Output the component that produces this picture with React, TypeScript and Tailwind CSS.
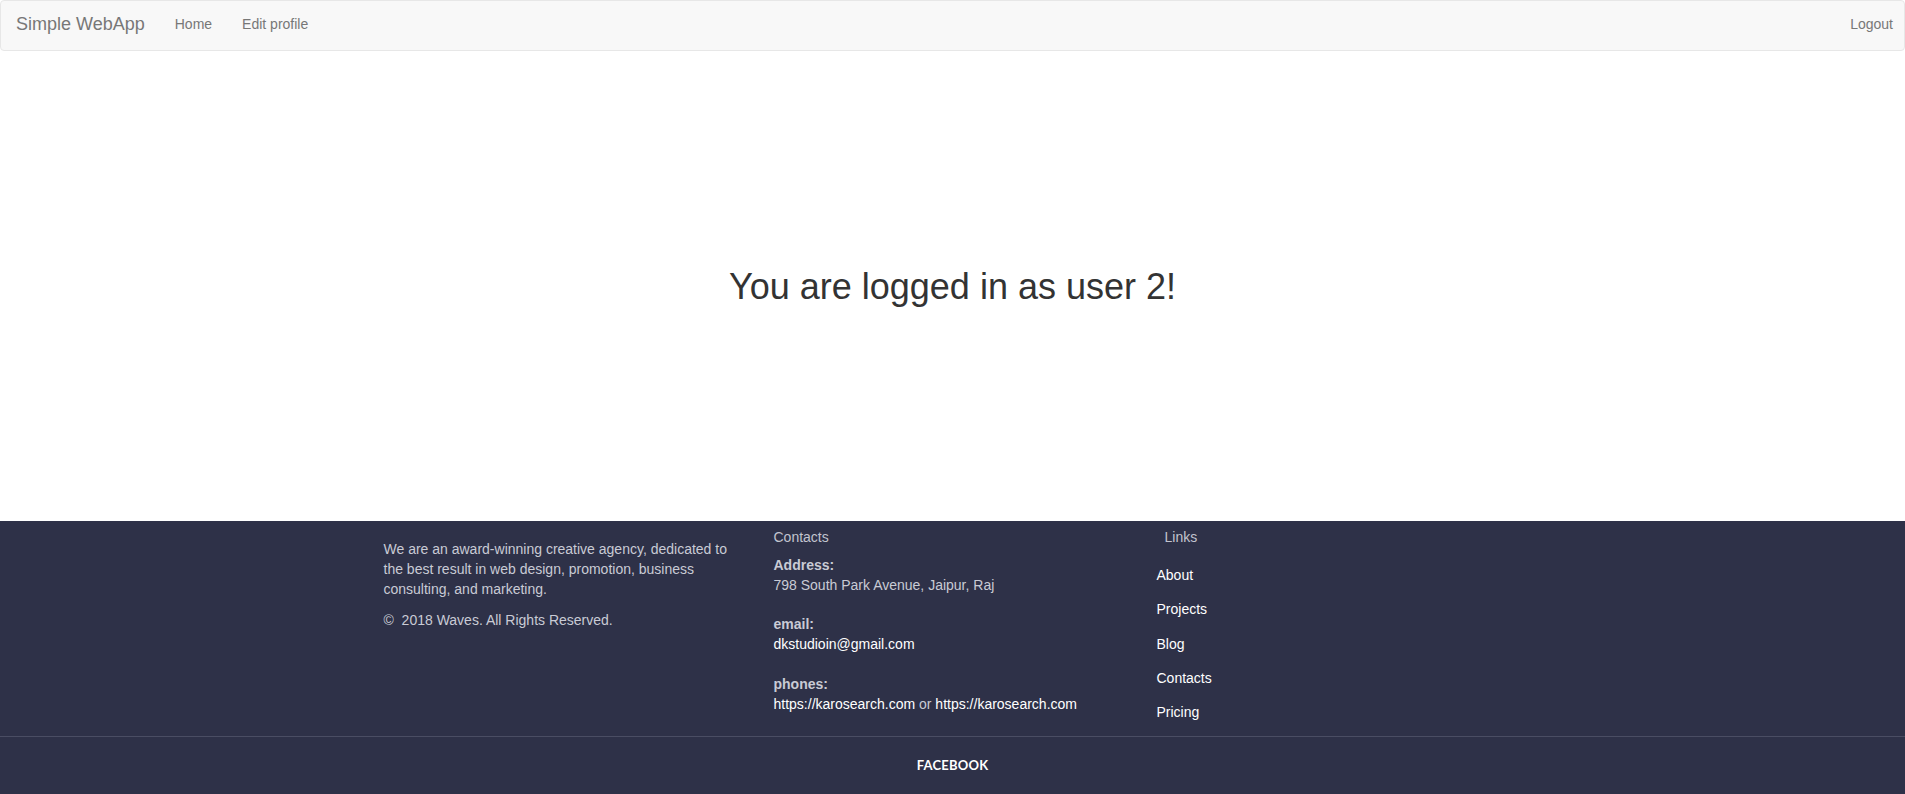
export default function App() {
  return (
    <div className="min-h-[794px] bg-white font-['Liberation_Sans',Arial,sans-serif] text-[14px] text-[#333]">
      <Navbar />
      <main className="flex h-[470px] items-center justify-center">
        <h1 className="mt-[2px] text-[36px] leading-[40px] font-normal text-[#333]">
          You are logged in as user 2!
        </h1>
      </main>
      <Footer />
    </div>
  );
}

function Navbar() {
  return (
    <nav className="flex h-[51px] items-start justify-between rounded-[4px] border border-[#e7e7e7] bg-[#f8f8f8] pt-[13px] text-[#777]">
      <div className="flex items-center">
        <a href="/" className="px-[15px] text-[18px] leading-[20px]">
          Simple WebApp
        </a>
        <a href="/" className="px-[15px] leading-[20px]">
          Home
        </a>
        <a href="/profile" className="px-[15px] leading-[20px]">
          Edit profile
        </a>
      </div>
      <a href="/logout" className="pl-[15px] pr-[11px] leading-[20px]">
        Logout
      </a>
    </nav>
  );
}

function Footer() {
  const links = ["About", "Projects", "Blog", "Contacts", "Pricing"];
  return (
    <footer className="bg-[#2e3148] text-[#c9cbd5]">
      <div className="mx-auto grid h-[215px] w-[1170px] grid-cols-3 leading-[20px]">
        <div className="pl-[16px] pr-[15px] pt-[18px]">
          <p>
            We are an award-winning creative agency, dedicated to the best
            result in web design, promotion, business consulting, and
            marketing.
          </p>
          <p className="mt-[11px]">©&nbsp; 2018 Waves. All Rights Reserved.</p>
        </div>
        <div className="pl-[16px] pr-[15px] pt-[6px]">
          <h5 className="text-[#c2c4cf]">Contacts</h5>
          <div className="mt-[8px]">
            <p className="font-bold">Address:</p>
            <p>798 South Park Avenue, Jaipur, Raj</p>
          </div>
          <div className="mt-[19px]">
            <p className="font-bold">email:</p>
            <a href="mailto:dkstudioin@gmail.com" className="text-white">
              dkstudioin@gmail.com
            </a>
          </div>
          <div className="mt-[20px]">
            <p className="font-bold">phones:</p>
            <p>
              <a href="https://karosearch.com" className="text-white">
                https://karosearch.com
              </a>{" "}
              or{" "}
              <a href="https://karosearch.com" className="text-white">
                https://karosearch.com
              </a>
            </p>
          </div>
        </div>
        <div className="px-[15px] pt-[6px]">
          <h5 className="pl-[2px] text-[#c2c4cf]">Links</h5>
          <ul className="-ml-[6px] mt-[11px]">
            {links.map((l) => (
              <li key={l} className="leading-[34.3px]">
                <a href="#" className="text-white">
                  {l}
                </a>
              </li>
            ))}
          </ul>
        </div>
      </div>
      <div className="flex h-[58px] items-center justify-center border-t border-[#4a4d63]">
        <a
          href="#"
          className="font-['Lato',sans-serif] text-[13px] font-bold uppercase tracking-[0.2px] text-white"
        >
          Facebook
        </a>
      </div>
    </footer>
  );
}
